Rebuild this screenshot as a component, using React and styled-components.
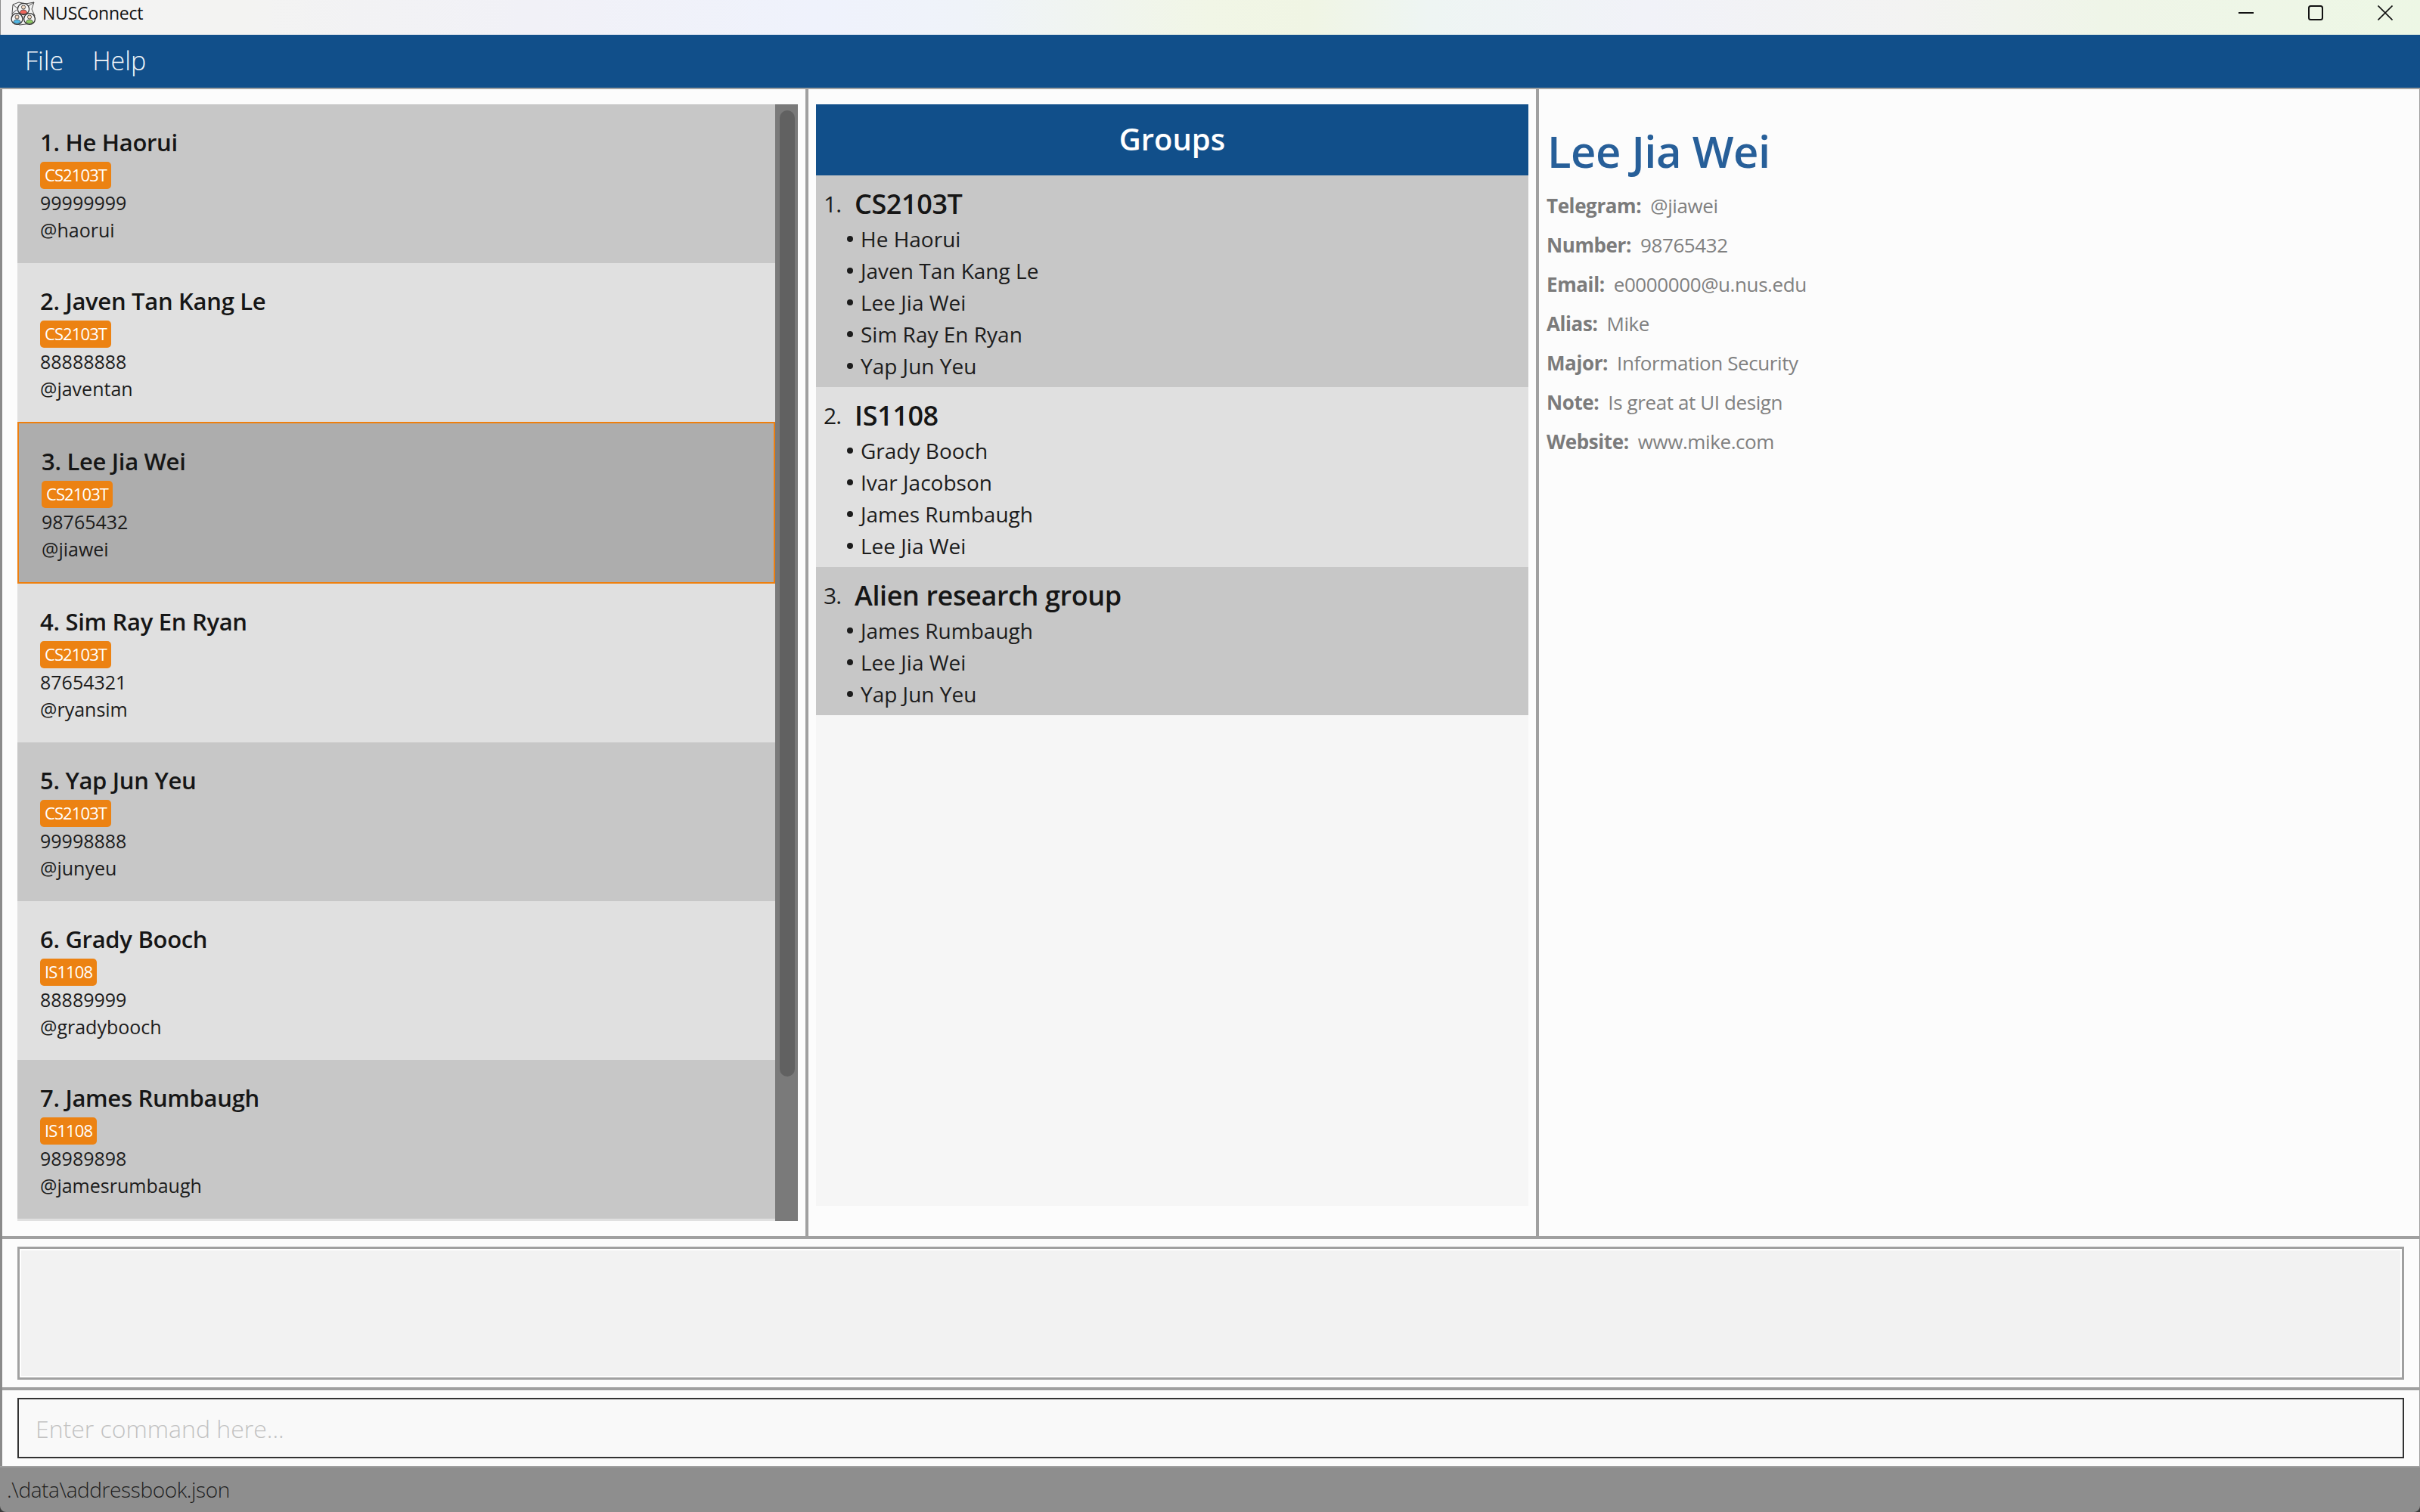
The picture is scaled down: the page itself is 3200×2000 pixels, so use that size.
import styled, { createGlobalStyle } from "styled-components";

const GlobalStyle = createGlobalStyle`
  html, body {
    margin: 0;
    padding: 0;
    background: #3c3c3c;
  }
  * {
    box-sizing: border-box;
  }
`;

const FONT = `"Open Sans", "Noto Sans", sans-serif`;

const persons = [
  { name: "He Haorui", tag: "CS2103T", phone: "99999999", handle: "@haorui" },
  { name: "Javen Tan Kang Le", tag: "CS2103T", phone: "88888888", handle: "@javentan" },
  { name: "Lee Jia Wei", tag: "CS2103T", phone: "98765432", handle: "@jiawei", selected: true },
  { name: "Sim Ray En Ryan", tag: "CS2103T", phone: "87654321", handle: "@ryansim" },
  { name: "Yap Jun Yeu", tag: "CS2103T", phone: "99998888", handle: "@junyeu" },
  { name: "Grady Booch", tag: "IS1108", phone: "88889999", handle: "@gradybooch" },
  { name: "James Rumbaugh", tag: "IS1108", phone: "98989898", handle: "@jamesrumbaugh" },
];

const groups = [
  { title: "CS2103T", members: ["He Haorui", "Javen Tan Kang Le", "Lee Jia Wei", "Sim Ray En Ryan", "Yap Jun Yeu"] },
  { title: "IS1108", members: ["Grady Booch", "Ivar Jacobson", "James Rumbaugh", "Lee Jia Wei"] },
  { title: "Alien research group", members: ["James Rumbaugh", "Lee Jia Wei", "Yap Jun Yeu"] },
];

const details = [
  ["Telegram:", "@jiawei"],
  ["Number:", "98765432"],
  ["Email:", "e0000000@u.nus.edu"],
  ["Alias:", "Mike"],
  ["Major:", "Information Security"],
  ["Note:", "Is great at UI design"],
  ["Website:", "www.mike.com"],
];

function Logo() {
  return (
    <svg width="33" height="33" viewBox="0 0 33 33">
      <g stroke="#3a3a3a" strokeWidth="0.9" fill="none">
        <path d="M3 5 L11 2 L20 4 L31 2 L28 11 L32 20 M3 5 L2 17 L8 12 M31 2 L22 8 M3 5 L9 10 M2 17 L3 29 L12 32 L20 31 L31 29" />
      </g>
      <circle cx="17" cy="11" r="7.6" fill="#f4f4f4" stroke="#333" strokeWidth="1.3" />
      <circle cx="8.5" cy="24" r="7.4" fill="#f4f4f4" stroke="#333" strokeWidth="1.3" />
      <circle cx="25" cy="24" r="7.4" fill="#f4f4f4" stroke="#333" strokeWidth="1.3" />
      <circle cx="17" cy="8.5" r="2.6" fill="#f3d9c2" stroke="#333" strokeWidth="0.8" />
      <path d="M12.2 16.5 Q12.5 12 17 12 Q21.5 12 21.8 16.5 Q17 18.8 12.2 16.5 Z" fill="#f0645a" stroke="#333" strokeWidth="0.7" />
      <circle cx="8.5" cy="21.5" r="2.6" fill="#f3d9c2" stroke="#333" strokeWidth="0.8" />
      <path d="M3.7 29 Q4 25 8.5 25 Q13 25 13.3 29 Q8.5 31.6 3.7 29 Z" fill="#4fb8e6" stroke="#333" strokeWidth="0.7" />
      <circle cx="25" cy="21.5" r="2.6" fill="#f3d9c2" stroke="#333" strokeWidth="0.8" />
      <path d="M20.2 29 Q20.5 25 25 25 Q29.5 25 29.8 29 Q25 31.6 20.2 29 Z" fill="#8fcb62" stroke="#333" strokeWidth="0.7" />
    </svg>
  );
}

export default function App() {
  return (
    <>
      <GlobalStyle />
      <Window>
        <TitleBar>
          <AppTitle>
            <Logo />
            <TitleText>NUSConnect</TitleText>
          </AppTitle>
          <WindowControls>
            <ControlButton>
              <svg width="20" height="20" viewBox="0 0 20 20">
                <path d="M0 10 H20" stroke="#111" strokeWidth="2" />
              </svg>
            </ControlButton>
            <ControlButton>
              <svg width="20" height="20" viewBox="0 0 20 20">
                <rect x="1" y="1" width="18" height="18" rx="2.5" fill="none" stroke="#111" strokeWidth="2" />
              </svg>
            </ControlButton>
            <ControlButton>
              <svg width="20" height="20" viewBox="0 0 20 20">
                <path d="M0.5 0.5 L19.5 19.5 M19.5 0.5 L0.5 19.5" stroke="#111" strokeWidth="1.6" />
              </svg>
            </ControlButton>
          </WindowControls>
        </TitleBar>
        <MenuBar>
          <MenuItem>File</MenuItem>
          <MenuItem>Help</MenuItem>
        </MenuBar>
        <Body>
          <TopPanes>
            <ListPane>
              <PersonList>
                {persons.map((p, i) => (
                  <PersonCard key={p.name} $odd={i % 2 === 0} $selected={p.selected}>
                    <PersonName>
                      {i + 1}. {p.name}
                    </PersonName>
                    <TagRow>
                      <Tag>{p.tag}</Tag>
                    </TagRow>
                    <PersonLine>{p.phone}</PersonLine>
                    <PersonLine>{p.handle}</PersonLine>
                  </PersonCard>
                ))}
              </PersonList>
              <ScrollTrack>
                <ScrollThumb />
              </ScrollTrack>
            </ListPane>
            <GroupPane>
              <GroupColumn>
                <GroupHeader>Groups</GroupHeader>
                {groups.map((g, i) => (
                  <GroupCard key={g.title} $odd={i % 2 === 0}>
                    <GroupTitleRow>
                      <GroupIndex>{i + 1}.</GroupIndex>
                      <GroupTitle>{g.title}</GroupTitle>
                    </GroupTitleRow>
                    {g.members.map((m) => (
                      <GroupMember key={m}>
                        <Bullet />
                        {m}
                      </GroupMember>
                    ))}
                  </GroupCard>
                ))}
              </GroupColumn>
            </GroupPane>
            <DetailPane>
              <DetailName>Lee Jia Wei</DetailName>
              {details.map(([label, value]) => (
                <DetailRow key={label}>
                  <DetailLabel>{label}</DetailLabel>
                  <DetailValue>{value}</DetailValue>
                </DetailRow>
              ))}
            </DetailPane>
          </TopPanes>
          <ResultPane>
            <ResultBox />
          </ResultPane>
          <CommandPane>
            <CommandBox placeholder="Enter command here..." readOnly />
          </CommandPane>
        </Body>
        <StatusBar>.\data\addressbook.json</StatusBar>
      </Window>
    </>
  );
}

const Window = styled.div`
  width: 3200px;
  height: 2000px;
  display: flex;
  flex-direction: column;
  overflow: hidden;
  border-radius: 0 0 8px 8px;
  font-family: ${FONT};
  color: #1a1a1a;
`;

const TitleBar = styled.div`
  height: 46px;
  flex: none;
  display: flex;
  justify-content: space-between;
  border-left: 1px solid #8c8c8c;
  background: linear-gradient(
    90deg,
    #f3f3f3 0%,
    #f3f3f2 10%,
    #f1f1f7 22%,
    #eff2fc 34%,
    #eff3f9 40%,
    #f1f6e6 50%,
    #f0f5e4 54%,
    #eef5f3 59%,
    #f1f2f8 68%,
    #f3f3f2 79%,
    #eff5e8 87%,
    #edf7e5 100%
  );
`;

const AppTitle = styled.div`
  display: flex;
  align-items: flex-start;
  gap: 9px;
  padding: 1px 0 0 13px;
`;

const TitleText = styled.span`
  font-size: 23px;
  line-height: 32px;
  letter-spacing: -0.2px;
  color: #111;
`;

const WindowControls = styled.div`
  display: flex;
`;

const ControlButton = styled.div`
  width: 92px;
  display: flex;
  justify-content: center;
  padding-top: 7px;
`;

const MenuBar = styled.div`
  height: 72px;
  flex: none;
  display: flex;
  gap: 38px;
  padding-left: 33px;
  background: #114f8a;
  border-bottom: 2px solid #a0a0a0;
`;

const MenuItem = styled.span`
  font-size: 34px;
  font-weight: 300;
  line-height: 68px;
  color: #f4f7fa;
`;

const Body = styled.div`
  height: 1821px;
  flex: none;
  display: flex;
  flex-direction: column;
  background: #fcfcfc;
  border-left: 3px solid #8a8a8a;
  border-right: 1px solid #a0a0a0;
`;

const TopPanes = styled.div`
  height: 1521px;
  flex: none;
  display: flex;
  border-bottom: 4px solid #a0a0a0;
`;

const ListPane = styled.div`
  width: 1062px;
  flex: none;
  display: flex;
  padding: 20px 10px 20px 20px;
`;

const PersonList = styled.div`
  width: 1002px;
  flex: none;
  overflow: hidden;
  background: #e0e0e0;
`;

const PersonCard = styled.div`
  height: ${(p) => (p.$selected ? 214 : 210)}px;
  padding: 28px 30px 0;
  background: ${(p) => (p.$selected ? "#adadad" : p.$odd ? "#c7c7c7" : "#e0e0e0")};
  border: ${(p) => (p.$selected ? "2px solid #ee7f0e" : "none")};
`;

const PersonName = styled.div`
  font-size: 31px;
  font-weight: 600;
  line-height: 44px;
  letter-spacing: -0.3px;
  color: #161616;
`;

const TagRow = styled.div`
  display: flex;
  margin: 4px 0 0;
`;

const Tag = styled.span`
  height: 36px;
  padding: 0 6px;
  border-radius: 5px;
  background: #ec8212;
  color: #fff;
  font-size: 22px;
  line-height: 35px;
  letter-spacing: -0.9px;
`;

const PersonLine = styled.div`
  font-size: 25px;
  line-height: 36px;
  color: #1c1c1c;
`;

const ScrollTrack = styled.div`
  width: 30px;
  flex: none;
  padding: 8px 4px 0 6px;
  background: #7a7a7a;
`;

const ScrollThumb = styled.div`
  height: 1278px;
  border-radius: 10px;
  background: #616161;
`;

const GroupPane = styled.div`
  width: 970px;
  flex: none;
  padding: 20px 10px 40px;
  border-left: 4px solid #a0a0a0;
  border-right: 4px solid #a0a0a0;
`;

const GroupColumn = styled.div`
  height: 100%;
  background: #f6f6f6;
`;

const GroupHeader = styled.div`
  height: 94px;
  background: #114f8a;
  color: #fff;
  text-align: center;
  font-size: 40px;
  font-weight: 600;
  line-height: 92px;
`;

const GroupCard = styled.div`
  padding: 0 10px 7px;
  background: ${(p) => (p.$odd ? "#c7c7c7" : "#e0e0e0")};
`;

const GroupTitleRow = styled.div`
  height: 63px;
  padding-top: 12px;
  display: flex;
  align-items: center;
  gap: 18px;
`;

const GroupIndex = styled.span`
  font-size: 30px;
  letter-spacing: -1px;
`;

const GroupTitle = styled.span`
  font-size: 36px;
  font-weight: 600;
  letter-spacing: -0.4px;
  color: #161616;
`;

const GroupMember = styled.div`
  height: 42px;
  display: flex;
  align-items: center;
  gap: 10px;
  padding-left: 31px;
  font-size: 28px;
  color: #1c1c1c;
`;

const Bullet = styled.span`
  width: 8px;
  height: 8px;
  border-radius: 50%;
  background: #1c1c1c;
`;

const DetailPane = styled.div`
  flex: 1;
  padding: 40px 10px;
`;

const DetailName = styled.div`
  font-size: 58px;
  font-weight: 600;
  line-height: 84px;
  letter-spacing: -0.5px;
  color: #275f99;
  margin: 0 0 4px 1px;
`;

const DetailRow = styled.div`
  height: 52px;
  display: flex;
  align-items: center;
  gap: 12px;
  font-size: 26px;
  letter-spacing: -0.4px;
`;

const DetailLabel = styled.span`
  font-weight: 700;
  color: #7b7b7b;
`;

const DetailValue = styled.span`
  color: #808080;
`;

const ResultPane = styled.div`
  height: 196px;
  flex: none;
  padding: 10px 20px;
`;

const ResultBox = styled.div`
  height: 176px;
  border: 3px solid #a0a0a0;
  box-shadow: inset 0 0 0 2px #fff;
  background: #f2f2f2;
`;

const CommandPane = styled.div`
  height: 104px;
  flex: none;
  padding: 10px 20px;
  border-top: 4px solid #a0a0a0;
`;

const CommandBox = styled.input`
  display: block;
  width: 100%;
  height: 80px;
  padding: 0 22px;
  border: 2px solid #333;
  border-radius: 0;
  outline: none;
  background: #f9f9f9;
  font-family: ${FONT};
  font-size: 32px;
  font-weight: 300;
  &::placeholder {
    color: #c2c2c2;
    opacity: 1;
  }
`;

const StatusBar = styled.div`
  height: 61px;
  flex: none;
  padding-left: 9px;
  background: #8e8e8e;
  border-top: 2px solid #a0a0a0;
  font-size: 28px;
  font-weight: 300;
  line-height: 58px;
  letter-spacing: -0.4px;
  color: #1e1e1e;
`;
